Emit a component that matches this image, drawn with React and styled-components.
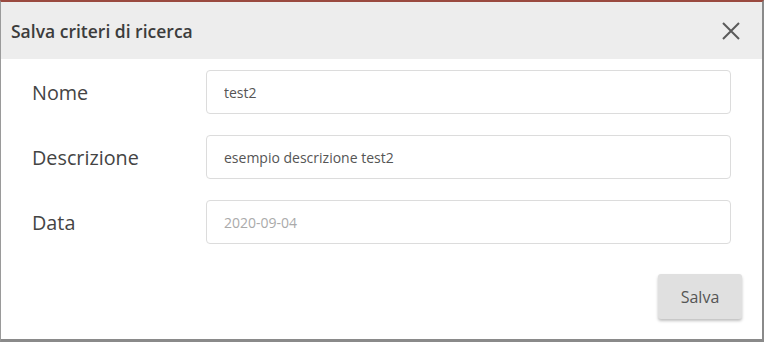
import styled, { createGlobalStyle } from "styled-components";

const GlobalStyle = createGlobalStyle`
    html, body {
        margin: 0;
        padding: 0;
        background: #ffffff;
    }
    * {
        box-sizing: border-box;
    }
`;

const Dialog = styled.div`
    width: 764px;
    height: 342px;
    display: flex;
    flex-direction: column;
    background: #ffffff;
    border-top: 2px solid #9a4a40;
    border-left: 1px solid #9a9a9a;
    border-right: 2px solid #8a8a8a;
    border-bottom: 3px solid #8a8a8a;
    font-family: "Open Sans", "Liberation Sans", sans-serif;
    color: #444;
`;

const Header = styled.div`
    height: 57px;
    flex: none;
    display: flex;
    align-items: center;
    justify-content: space-between;
    padding: 0 20px 0 10px;
    background: #ededed;
`;

const Title = styled.h1`
    margin: 0;
    font-size: 17.5px;
    font-weight: 600;
    color: #3c3c3c;
`;

const CloseButton = styled.button`
    border: none;
    background: none;
    padding: 0;
    width: 22px;
    height: 22px;
    display: flex;
    align-items: center;
    justify-content: center;
    cursor: pointer;
`;

const Body = styled.div`
    flex: 1;
    display: flex;
    flex-direction: column;
    padding: 11px 31px 0 31px;
`;

const Form = styled.div`
    display: grid;
    grid-template-columns: 174px 1fr;
    row-gap: 21px;
    align-items: center;
`;

const Label = styled.label`
    font-size: 19.8px;
    color: #444;
`;

const Input = styled.input`
    height: 44px;
    width: 100%;
    padding: 0 17px;
    border: 1px solid #dcdcdc;
    border-radius: 4px;
    font-family: inherit;
    font-size: 14px;
    color: #555;
    outline: none;
    &::placeholder {
        color: #aaa;
    }
`;

const Footer = styled.div`
    display: flex;
    justify-content: flex-end;
    padding-top: 30px;
    margin-right: -11px;
`;

const SaveButton = styled.button`
    width: 84px;
    height: 45px;
    border: none;
    border-radius: 3px;
    background: #e0e0e0;
    box-shadow: 0 2px 3px rgba(0, 0, 0, 0.25);
    font-family: inherit;
    font-size: 16px;
    color: #555;
    cursor: pointer;
`;

function App() {
    return (
        <>
            <GlobalStyle />
            <Dialog>
                <Header>
                    <Title>Salva criteri di ricerca</Title>
                    <CloseButton>
                        <svg width="20" height="20" viewBox="0 0 20 20">
                            <path d="M2 2 L18 18 M18 2 L2 18" stroke="#5a5a5a" strokeWidth="2" />
                        </svg>
                    </CloseButton>
                </Header>
                <Body>
                    <Form>
                        <Label>Nome</Label>
                        <Input defaultValue="test2" />
                        <Label>Descrizione</Label>
                        <Input defaultValue="esempio descrizione test2" />
                        <Label>Data</Label>
                        <Input placeholder="2020-09-04" />
                    </Form>
                    <Footer>
                        <SaveButton>Salva</SaveButton>
                    </Footer>
                </Body>
            </Dialog>
        </>
    );
}

export default App;
